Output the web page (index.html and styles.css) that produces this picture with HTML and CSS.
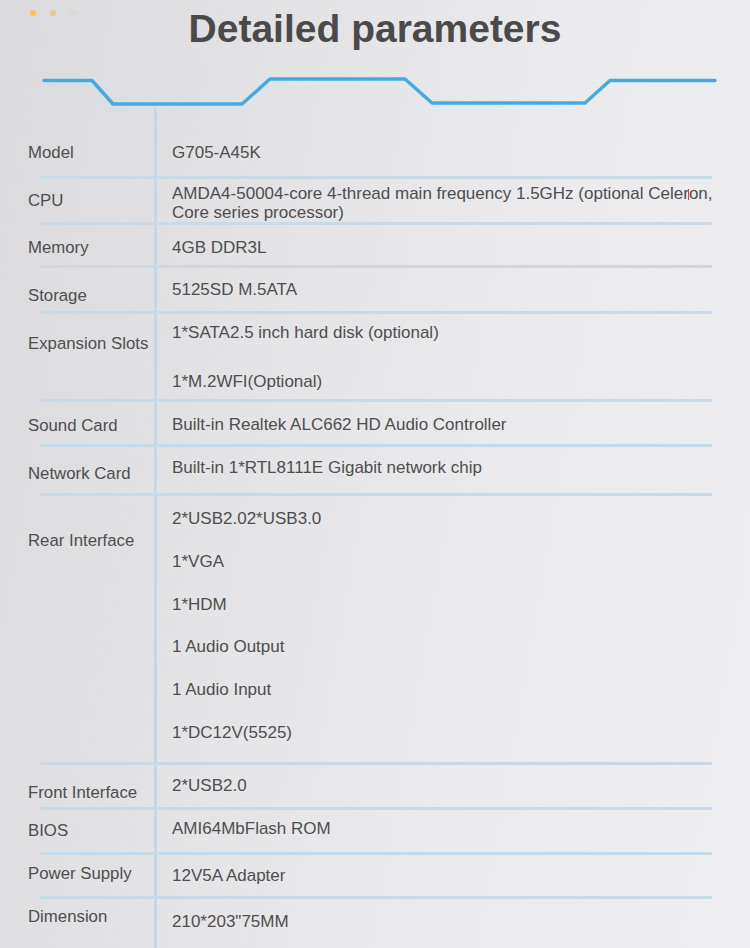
FILE: index.html
```html
<!DOCTYPE html>
<html lang="en">
<head>
<meta charset="utf-8">
<title>Detailed parameters</title>
<link rel="stylesheet" href="styles.css">
</head>
<body>
<div class="page">
  <header class="head">
    <div class="dots"><span class="dot d1"></span><span class="dot d2"></span><span class="dot d3"></span></div>
    <h1 class="title">Detailed parameters</h1>
    <svg class="wave" width="750" height="44" viewBox="0 0 750 44">
      <polyline points="44,16.5 92,16.5 113,40 242,40 270,15 405,15 432,39 585,39 610,16.5 715,16.5" fill="none" stroke="#42ace1" stroke-width="3.5" stroke-linejoin="round" stroke-linecap="round"/>
    </svg>
  </header>
  <section class="sheet">
    <div class="row r-model"><div class="lab">Model</div><div class="val"><div class="v">G705-A45K</div></div></div>
    <div class="row r-cpu"><div class="lab">CPU</div><div class="val"><div class="v v-tight">AMDA4-50004-core 4-thread main frequency 1.5GHz (optional Celer<span class="caret"></span>on,<br>Core series processor)</div></div></div>
    <div class="row r-mem"><div class="lab">Memory</div><div class="val"><div class="v">4GB DDR3L</div></div></div>
    <div class="row r-sto"><div class="lab">Storage</div><div class="val"><div class="v">5125SD M.5ATA</div></div></div>
    <div class="row r-exp"><div class="lab">Expansion Slots</div><div class="val"><div class="v">1*SATA2.5 inch hard disk (optional)</div><div class="v">1*M.2WFI(Optional)</div></div></div>
    <div class="row r-snd"><div class="lab">Sound Card</div><div class="val"><div class="v">Built-in Realtek ALC662 HD Audio Controller</div></div></div>
    <div class="row r-net"><div class="lab">Network Card</div><div class="val"><div class="v">Built-in 1*RTL8111E Gigabit network chip</div></div></div>
    <div class="row r-rear"><div class="lab">Rear Interface</div><div class="val"><div class="v">2*USB2.02*USB3.0</div><div class="v">1*VGA</div><div class="v">1*HDM</div><div class="v">1 Audio Output</div><div class="v">1 Audio Input</div><div class="v">1*DC12V(5525)</div></div></div>
    <div class="row r-front"><div class="lab">Front Interface</div><div class="val"><div class="v">2*USB2.0</div></div></div>
    <div class="row r-bios"><div class="lab">BIOS</div><div class="val"><div class="v">AMI64MbFlash ROM</div></div></div>
    <div class="row r-pow"><div class="lab">Power Supply</div><div class="val"><div class="v">12V5A Adapter</div></div></div>
    <div class="row r-dim last"><div class="lab">Dimension</div><div class="val"><div class="v">210*203"75MM</div></div></div>
  </section>
</div>
</body>
</html>
```

FILE: styles.css
```css
* { box-sizing: border-box; }
html, body { margin: 0; padding: 0; }
body {
  width: 750px;
  height: 948px;
  overflow: hidden;
  font-family: "Liberation Sans", Arial, sans-serif;
  background: linear-gradient(100deg, #dadadc 0%, #e4e4e6 35%, #ebebed 65%, #eeeef0 100%);
}
.page { position: relative; width: 750px; height: 948px; }
.head { position: relative; height: 108px; }
.dots { position: absolute; left: 30px; top: 10px; display: flex; gap: 14px; }
.dot { width: 6px; height: 6px; border-radius: 50%; }
.d1 { background: #fbc43a; }
.d2 { background: #e7c98c; }
.d3 { background: #dcd8d0; }
.title {
  margin: 0;
  padding-top: 5px;
  font-size: 39px;
  line-height: 48px;
  font-weight: bold;
  color: #4a4a4a;
  text-align: center;
}
.wave { display: block; margin-top: 11px; }

.sheet { position: relative; padding-left: 28px; }
.sheet::before {
  content: "";
  position: absolute;
  left: 154px;
  top: 0;
  width: 2.5px;
  height: 840px;
  background: #c3d7e6;
}
.row {
  position: relative;
  display: grid;
  grid-template-columns: 144px 1fr;
  align-items: start;
  font-size: 17px;
  color: #4e4e4e;
}
.row::after {
  content: "";
  position: absolute;
  left: 12px;
  bottom: 0;
  width: 672px;
  height: 3px;
  background: #c8dae7;
}
.row.last::after { display: none; }
.lab, .val { margin-top: 1px; }
.lab, .v { line-height: 20px; white-space: nowrap; }
.lab { font-size: 16.8px; }
.v-tight { line-height: 19px; }
.val { display: flex; flex-direction: column; }

.caret { position: relative; display: inline-block; width: 0; height: 1px; }
.caret::after {
  content: "";
  position: absolute;
  left: -1px;
  top: -9px;
  width: 1.5px;
  height: 11px;
  background: #e23c3c;
}

.r-model { height: 71px; }
.r-model .lab, .r-model .val { padding-top: 34px; }
.r-cpu { height: 46px; }
.r-cpu .lab { padding-top: 11px; }
.r-cpu .val { padding-top: 4px; }
.r-mem { height: 43px; }
.r-mem .lab, .r-mem .val { padding-top: 12px; }
.r-sto { height: 46px; }
.r-sto .lab { padding-top: 17px; }
.r-sto .val { padding-top: 11px; }
.r-exp { height: 88px; }
.r-exp .lab { padding-top: 19px; }
.r-exp .val { padding-top: 8px; gap: 29px; }
.r-snd { height: 45px; }
.r-snd .lab { padding-top: 13px; }
.r-snd .val { padding-top: 12px; }
.r-net { height: 49px; }
.r-net .lab { padding-top: 16px; }
.r-net .val { padding-top: 10px; }
.r-rear { height: 269px; }
.r-rear .lab { padding-top: 34px; }
.r-rear .val { padding-top: 12px; gap: 22.8px; }
.r-front { height: 45px; }
.r-front .lab { padding-top: 17px; }
.r-front .val { padding-top: 10px; }
.r-bios { height: 45px; }
.r-bios .lab { padding-top: 10px; }
.r-bios .val { padding-top: 8px; }
.r-pow { height: 44px; }
.r-pow .lab { padding-top: 8px; }
.r-pow .val { padding-top: 10px; }
.r-dim { height: 49px; }
.r-dim .lab { padding-top: 7px; }
.r-dim .val { padding-top: 12px; }
```
